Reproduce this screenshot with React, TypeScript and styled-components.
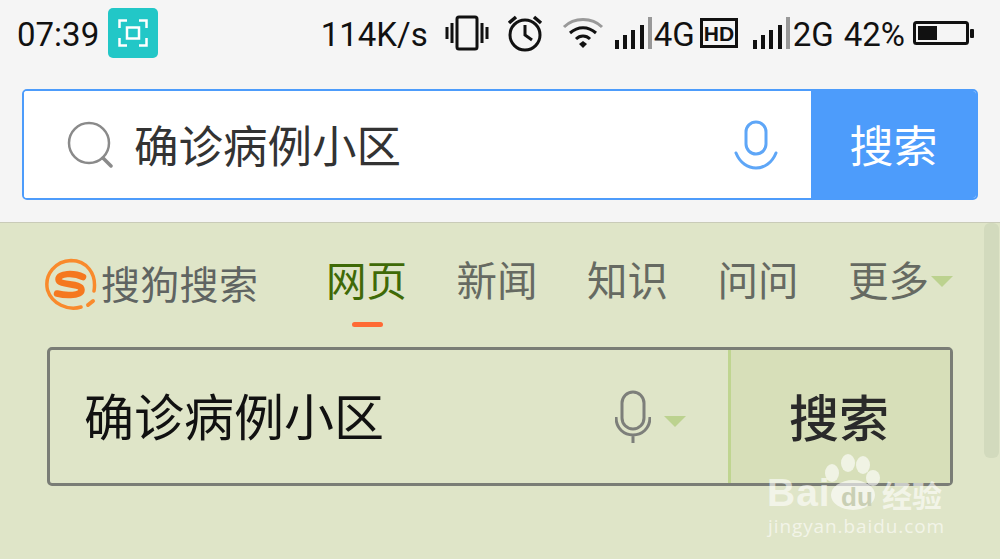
import React from "react";
import styled, { createGlobalStyle } from "styled-components";

const Global = createGlobalStyle`
  html, body { margin: 0; padding: 0; width: 1000px; height: 559px; overflow: hidden; background: #dfe5c8; }
  #root { width: 1000px; height: 559px; }
  * { box-sizing: border-box; }
`;
const CJK = `"Noto Sans CJK SC", "Noto Sans", sans-serif`;

const Page = styled.div`
  position: relative; width: 1000px; height: 559px; overflow: hidden;
  background: #dfe5c8; font-family: ${CJK};
`;
const Chrome = styled.header`
  height: 223px; background: #f5f5f5; border-bottom: 1px solid #c9cbb8;
  padding: 8px 22px 0 17px; display: flex; flex-direction: column;
`;
const StatusBar = styled.div`
  height: 50px; display: flex; align-items: center; color: #111; padding-right: 3px;
  font-family: Roboto, sans-serif;
`;
const StatusText = styled.span<{ $ml?: number }>`
  font-size: 33px; line-height: 50px; margin-top: 4px; margin-left: ${p => p.$ml ?? 0}px; white-space: nowrap;
`;
const ShotBadge = styled.div`
  width: 50px; height: 50px; margin-left: 9px; margin-right: auto; border-radius: 5px;
  background: #22c7c7; display: flex; align-items: center; justify-content: center;
`;
const StatusIcon = styled.svg<{ $ml?: number }>`
  display: block; flex: none; margin-left: ${p => p.$ml ?? 0}px;
`;
const TopSearch = styled.div`
  margin: 31px 0 0 5px; height: 111px; display: flex; border: 2px solid #4d9cfb; border-radius: 5px; overflow: hidden; background: #fff;
`;
const TopField = styled.div`
  flex: 1; display: flex; align-items: center; padding: 0 33px 0 43px; background: #fff;
`;
const TopQuery = styled.span`
  flex: 1; margin: 0 0 2px 21px; font-size: 44.5px; line-height: 50px; color: #333; white-space: nowrap;
`;
const TopButton = styled.div`
  width: 165px; background: #4d9cfb; color: #fff; font-size: 44px; padding-bottom: 2px; display: flex; align-items: center; justify-content: center;
`;
const Nav = styled.nav`
  height: 118px; display: flex; align-items: center; padding-left: 44px;
`;
const Logo = styled.div`
  display: flex; align-items: center; width: 282px; flex: none; position: relative; top: 2px;
`;
const LogoText = styled.span`
  font-size: 39px; line-height: 50px; color: #5f6462; margin: 0 0 4px 3px; letter-spacing: 0.3px; white-space: nowrap;
`;
const Tab = styled.div<{ $active?: boolean }>`
  position: relative; top: -3px; width: 130.5px; flex: none; font-size: 40.5px; line-height: 50px;
  color: ${p => (p.$active ? "#3f6a07" : "#666a62")}; white-space: nowrap;
`;
const Underline = styled.i`
  position: absolute; left: 26px; top: 68px; width: 31px; height: 5px; border-radius: 3px; background: #ff6a35;
`;
const Caret = styled.i`
  position: absolute; left: 83px; top: 22px; width: 0; height: 0;
  border-left: 11px solid transparent; border-right: 11px solid transparent; border-top: 11px solid #bcd28f;
`;
const MainSearch = styled.div`
  margin: 6px 47px 0 47px; height: 139px; border: 3px solid #7a7d76; border-radius: 5px; display: flex; background: #dfe5c8;
`;
const MainField = styled.div`
  flex: 1; display: flex; align-items: center; padding-left: 34px;
`;
const MainQuery = styled.span`
  flex: 1; font-size: 50px; line-height: 60px; margin-bottom: 6px; color: #111; white-space: nowrap;
`;
const MicWrap = styled.div`
  display: flex; align-items: center; margin-right: 42px; gap: 13px;
`;
const SmallCaret = styled.i`
  width: 0; height: 0; margin-top: 9px;
  border-left: 11px solid transparent; border-right: 11px solid transparent; border-top: 11px solid #bcd28f;
`;
const MainButton = styled.div`
  width: 222px; background: #d7dfb9; border-left: 3px solid #bfd590; color: #2a2a2a;
  font-size: 50px; font-weight: 500; padding: 0 3px 4px 0; display: flex; align-items: center; justify-content: center;
`;
const Scrollbar = styled.div`
  position: absolute; right: 1px; top: 223px; width: 15px; height: 235px; border-radius: 6px; background: #d2dabd;
`;
const Watermark = styled.div`
  position: absolute; left: 766px; top: 452px; width: 190px; height: 90px; color: rgba(255,255,255,.6);
`;
const WmBai = styled.span`
  position: absolute; left: 1px; top: 23px; font-family: "Liberation Sans", sans-serif;
  font-weight: 700; font-size: 39px; line-height: 36px; white-space: nowrap; letter-spacing: 1px;
`;
const WmDu = styled.span`
  position: absolute; left: 75px; top: 31px; font-family: "Liberation Sans", sans-serif;
  font-weight: 700; font-size: 26px; line-height: 28px; color: #c9cfb4; white-space: nowrap;
`;
const WmCn = styled.span`
  position: absolute; left: 116px; top: 27px; font-family: ${CJK}; font-size: 30px; line-height: 30px; font-weight: 700; white-space: nowrap;
`;
const WmUrl = styled.div`
  position: absolute; left: 2px; top: 63px; font-family: "Open Sans", sans-serif; font-size: 19px; line-height: 22px; letter-spacing: 0.9px; white-space: nowrap;
`;
const Paw = styled.svg`
  position: absolute; left: 56px; top: 0;
`;

const Bars = ({ ml }: { ml: number }) => (
  <StatusIcon $ml={ml} width="38" height="34" viewBox="0 0 38 34">
    <g fill="#111">
      <rect x="0" y="24" width="4" height="9" /><rect x="8" y="19" width="4" height="14" />
      <rect x="16" y="14" width="4" height="19" /><rect x="25" y="9" width="4" height="24" />
    </g>
    <rect x="33" y="1" width="4" height="32" fill="#999" />
  </StatusIcon>
);

export default function App() {
  return (
    <Page>
      <Global />
      <Chrome>
        <StatusBar>
          <StatusText>07:39</StatusText>
          <ShotBadge>
            <svg width="30" height="28" viewBox="0 0 30 28" fill="none" stroke="#fff" strokeWidth="2.5">
              <path d="M1.5 9V1.5H9M21 1.5h7.5V9M28.5 19v7.5H21M9 26.5H1.5V19" />
              <rect x="9" y="8.5" width="12" height="11" />
            </svg>
          </ShotBadge>
          <StatusText>114K/s</StatusText>
          <StatusIcon $ml={17} width="44" height="36" viewBox="0 0 44 36" fill="none" stroke="#111">
            <rect x="12" y="2" width="20" height="32" rx="2" strokeWidth="3" />
            <path d="M7 8v20M37 8v20" strokeWidth="3" /><path d="M2 12v12M42 12v12" strokeWidth="3" />
          </StatusIcon>
          <StatusIcon $ml={17} width="38" height="38" viewBox="0 0 38 38" fill="none" stroke="#111" strokeWidth="3">
            <circle cx="19" cy="21" r="15" />
            <path d="M19 11v10l7 5" /><path d="M3 9l7-6M35 9l-7-6" strokeWidth="3.5" />
          </StatusIcon>
          <StatusIcon $ml={18} width="42" height="34" viewBox="0 0 42 34" fill="none">
            <path d="M2 11C12 1 30 1 40 11" stroke="#999" strokeWidth="3" />
            <path d="M8 17c8-7 18-7 26 0" stroke="#111" strokeWidth="3" />
            <path d="M14 23c4-4 10-4 14 0" stroke="#111" strokeWidth="3" />
            <path d="M17 28l4-3 4 3-4 4z" fill="#111" />
          </StatusIcon>
          <Bars ml={11} />
          <StatusText $ml={1}>4G</StatusText>
          <StatusIcon $ml={5} width="38" height="30" viewBox="0 0 38 30">
            <rect x="1.5" y="1.5" width="35" height="27" fill="none" stroke="#111" strokeWidth="3" />
            <text x="19" y="23" textAnchor="middle" fontFamily="Liberation Sans" fontWeight="700" fontSize="21" fill="#111">HD</text>
          </StatusIcon>
          <Bars ml={15} />
          <StatusText $ml={2}>2G</StatusText>
          <StatusText $ml={10}>42%</StatusText>
          <StatusIcon $ml={8} width="62" height="24" viewBox="0 0 62 24">
            <rect x="1.5" y="1.5" width="53" height="21" rx="2" fill="none" stroke="#111" strokeWidth="3" />
            <rect x="5" y="5" width="19" height="14" fill="#111" />
            <rect x="57" y="8" width="4" height="9" rx="1" fill="#111" />
          </StatusIcon>
        </StatusBar>
        <TopSearch>
          <TopField>
            <svg width="46" height="48" viewBox="0 0 46 48" fill="none" stroke="#8a8a8a" strokeWidth="2.5">
              <circle cx="22" cy="22" r="20" /><path d="M36 37l8 8" strokeWidth="3.5" strokeLinecap="round" />
            </svg>
            <TopQuery>确诊病例小区</TopQuery>
            <svg width="44" height="50" viewBox="0 0 44 50" fill="none" stroke="#5ea6f7" strokeWidth="3">
              <rect x="12" y="2" width="20" height="32" rx="10" />
              <path d="M2 33c8 20 32 20 40 0" strokeLinecap="round" />
            </svg>
          </TopField>
          <TopButton>搜索</TopButton>
        </TopSearch>
      </Chrome>
      <Nav>
        <Logo>
          <svg width="54" height="52" viewBox="0 0 54 52" fill="none">
            <path d="M37 49C24 53 8 46 3.5 32C0 16 12 3 27 2.500C42 2.500 53 15 50 33" stroke="#f98a2c" strokeWidth="3.500" strokeLinecap="round" />
            <path d="M39 19C30 14.500 14 15 14.500 21.500C15 28 37 24.500 37.500 31.500C38 38 22 38 13 35.500" stroke="#f5781f" strokeWidth="6.500" strokeLinecap="round" />
            <path d="M44 47l5-4" stroke="#f98a2c" strokeWidth="4" strokeLinecap="round" />
          </svg>
          <LogoText>搜狗搜索</LogoText>
        </Logo>
        <Tab $active>网页<Underline /></Tab>
        <Tab>新闻</Tab>
        <Tab>知识</Tab>
        <Tab>问问</Tab>
        <Tab>更多<Caret /></Tab>
      </Nav>
      <MainSearch>
        <MainField>
          <MainQuery>确诊病例小区</MainQuery>
          <MicWrap>
            <svg width="36" height="54" viewBox="0 0 36 54" fill="none" stroke="#7d7f7a" strokeWidth="3">
              <rect x="7" y="2" width="22" height="37" rx="11" />
              <path d="M1 27c0 24 34 24 34 0M18 45v8" />
            </svg>
            <SmallCaret />
          </MicWrap>
        </MainField>
        <MainButton>搜索</MainButton>
      </MainSearch>
      <Scrollbar />
      <Watermark>
        <WmBai>Bai</WmBai>
        <Paw width="66" height="60" viewBox="0 0 66 60" fill="rgba(255,255,255,.62)">
          <ellipse cx="10" cy="21" rx="7" ry="9" /><ellipse cx="26" cy="11" rx="7" ry="9" />
          <ellipse cx="41" cy="13" rx="7" ry="9" /><ellipse cx="51" cy="26" rx="7" ry="8" />
          <ellipse cx="31" cy="43" rx="22" ry="15" />
        </Paw>
        <WmDu>du</WmDu>
        <WmCn>经验</WmCn>
        <WmUrl>jingyan.baidu.com</WmUrl>
      </Watermark>
    </Page>
  );
}
